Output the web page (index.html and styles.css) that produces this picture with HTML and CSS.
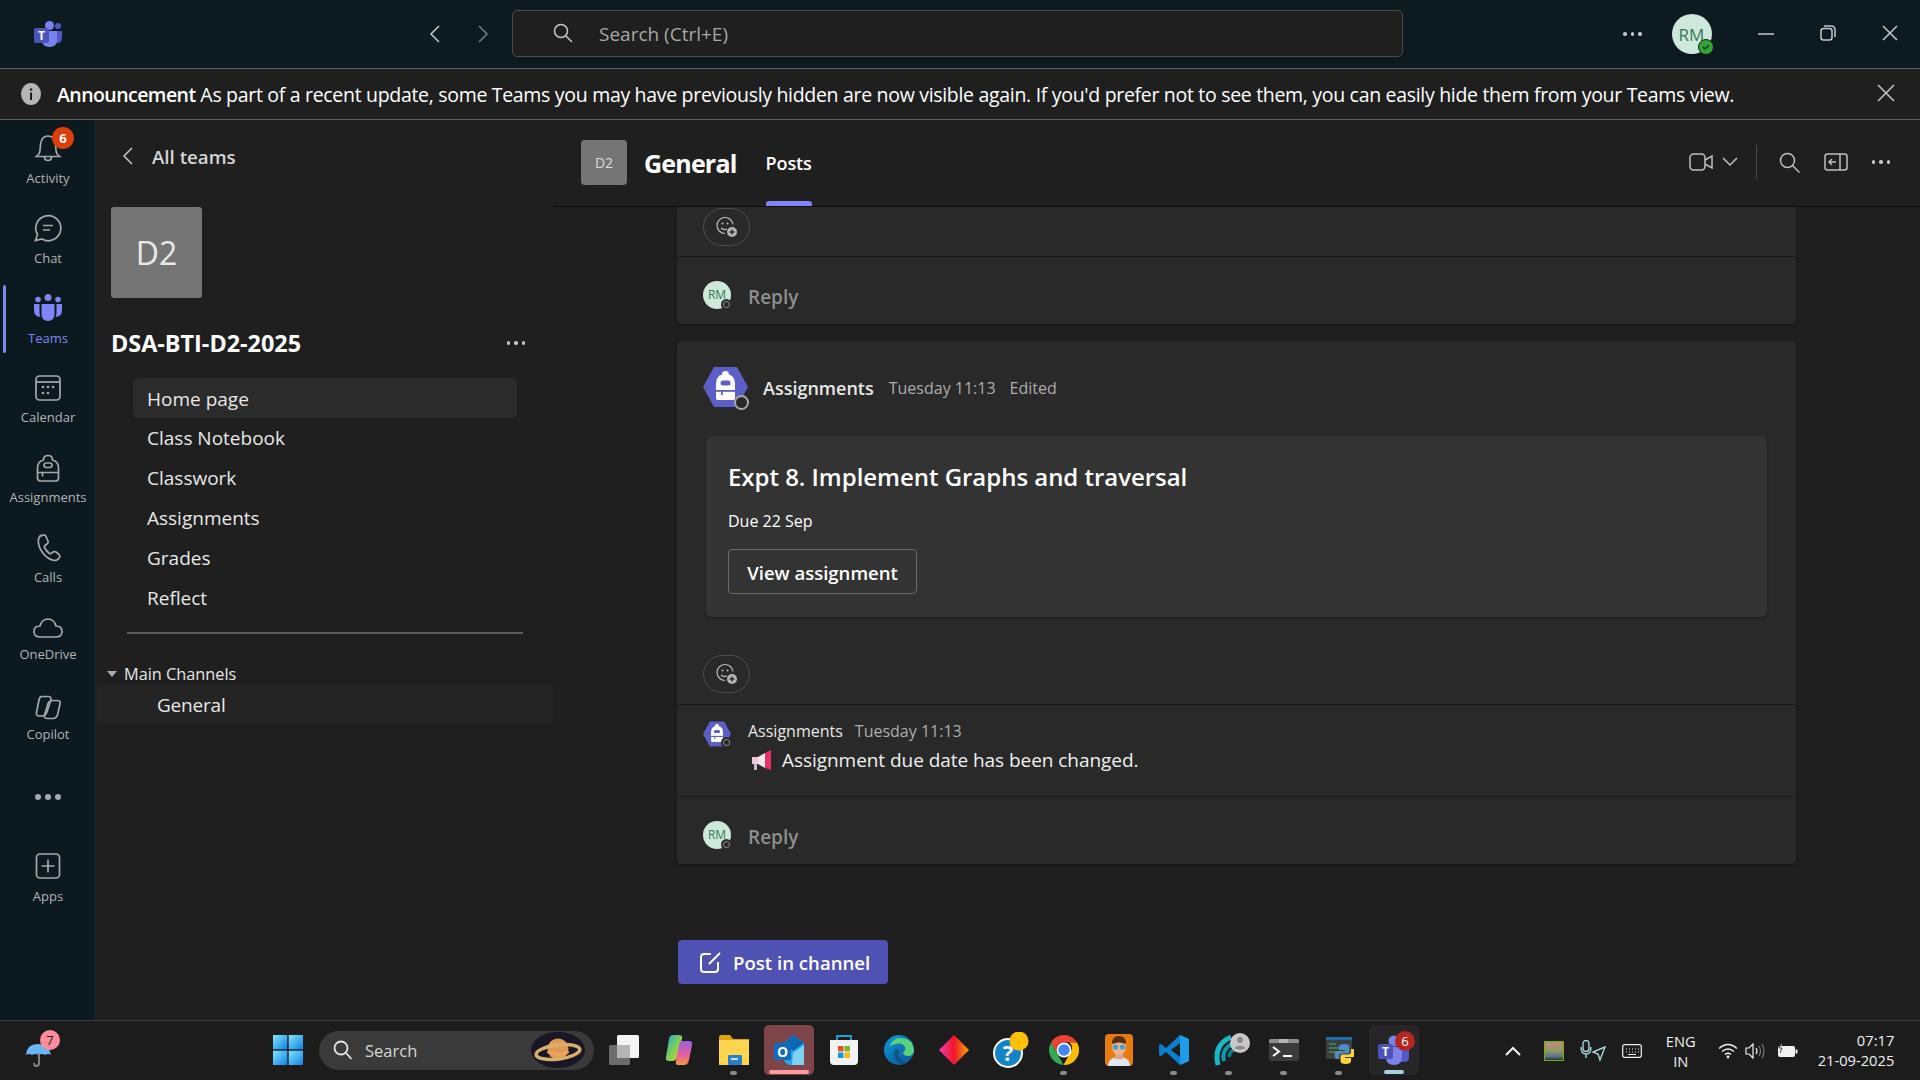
FILE: index.html
```html
<!DOCTYPE html>
<html lang="en">
<head>
    <meta charset="UTF-8">
    <title>General (DSA-BTI-D2-2025) | Microsoft Teams</title>
    <link rel="stylesheet" href="styles.css">
</head>
<body>
    <!-- shared icons -->
    <svg class="sprite">
        <symbol id="emoji" viewBox="0 0 22 22">
            <path d="M17 8.500A8 8 0 1 0 9 17.500" fill="none" stroke="#bdbdbd" stroke-width="1.200"/>
            <circle cx="6.500" cy="7.500" r="1" fill="#bdbdbd"/>
            <circle cx="11.500" cy="7.500" r="1" fill="#bdbdbd"/>
            <path d="M5 12q3 2.500 6 1" fill="none" stroke="#bdbdbd" stroke-width="1.200"/>
            <circle cx="16" cy="16" r="5" fill="#b5b5b5"/>
            <path d="M16 13.500v5M13.500 16h5" stroke="#292929" stroke-width="1.400"/>
        </symbol>
        <symbol id="bag" viewBox="0 0 45 40">
            <polygon points="11,0 34,0 45,20 34,40 11,40 0,20" fill="#5b5fc7"/>
            <path d="M13 17q0-8 6-9.500q0-3.500 3.500-3.500t3.500 3.500q6 1.500 6 9.500v14q0 2-2 2h-15q-2 0-2-2z" fill="#fff"/>
            <rect x="17.500" y="13.500" width="10" height="5" rx="2.500" fill="#5b5fc7"/>
            <rect x="13" y="23" width="19" height="1.800" fill="#5b5fc7"/>
            <rect x="18" y="23" width="1.800" height="5" fill="#5b5fc7"/>
        </symbol>
    </svg>

    <div class="app">
        <header class="titlebar">
            <svg class="teams-logo" width="28" height="26" viewBox="0 0 28 26">
                <circle cx="24" cy="5" r="3" fill="#5059c9"/>
                <path d="M17 10h10a1 1 0 0 1 1 1v6q0 5-5 5t-6-4z" fill="#5059c9"/>
                <circle cx="15.500" cy="4.500" r="4.500" fill="#7b83eb"/>
                <path d="M8 10h14a1 1 0 0 1 1 1v8q0 7-7.500 7t-7.500-7z" fill="#7b83eb"/>
                <rect x="0" y="7" width="15" height="15" rx="2" fill="#4b53bc"/>
                <text x="7.500" y="19" class="logo-t">T</text>
            </svg>
            <div class="history">
                <svg width="12" height="20" viewBox="0 0 12 20"><path d="M10 2L2 10l8 8" class="line-light"/></svg>
                <svg width="12" height="20" viewBox="0 0 12 20"><path d="M2 2l8 8-8 8" class="line-dim"/></svg>
            </div>
            <div class="searchbox">
                <svg width="20" height="20" viewBox="0 0 20 20"><circle cx="8" cy="8" r="6.500" class="line-light"/><path d="M13 13l6 6" class="line-light"/></svg>
                <span>Search (Ctrl+E)</span>
            </div>
            <div class="title-right">
                <div class="dots"><i></i><i></i><i></i></div>
                <div class="me">
                    <span class="me-initials">RM</span>
                    <span class="me-status"><svg width="8" height="8" viewBox="0 0 8 8"><path d="M1 4l2 2 4-4" fill="none" stroke="#123" stroke-width="1.300"/></svg></span>
                </div>
                <svg class="win-min" width="16" height="2" viewBox="0 0 16 2"><path d="M0 1h16" class="line-light"/></svg>
                <svg class="win-max" width="16" height="16" viewBox="0 0 16 16"><rect x="1" y="3.500" width="11" height="11.500" rx="2.500" class="line-light"/><path d="M4 1h7q4 0 4 4v7" class="line-light"/></svg>
                <svg class="win-close" width="16" height="16" viewBox="0 0 16 16"><path d="M1 1l14 14M15 1L1 15" class="line-light"/></svg>
            </div>
        </header>

        <div class="announce">
            <svg width="20" height="22" viewBox="0 0 20 22"><ellipse cx="10" cy="11" rx="10" ry="11" fill="#b5b5b5"/><rect x="9" y="9.500" width="2" height="7.500" fill="#1f1f1f"/><circle cx="10" cy="6.500" r="1.300" fill="#1f1f1f"/></svg>
            <p><b>Announcement</b> As part of a recent update, some Teams you may have previously hidden are now visible again. If you'd prefer not to see them, you can easily hide them from your Teams view.</p>
            <svg class="announce-close" width="18" height="18" viewBox="0 0 18 18"><path d="M1 1l16 16M17 1L1 17" class="line-light"/></svg>
        </div>

        <div class="main">
            <nav class="rail">
                <a class="rail-item">
                    <svg width="28" height="28" viewBox="0 0 28 28"><path d="M2.500 22.500q3-2 3.500-6l.5-6q1-8.500 7.500-8.500t7.500 8.500l.5 6q.5 4 3.500 6z" class="line-rail"/><path d="M10.500 23q0 3.500 3.500 3.500t3.500-3.500" class="line-rail"/></svg>
                    <span class="rail-badge">6</span>
                    <span>Activity</span>
                </a>
                <a class="rail-item">
                    <svg width="28" height="28" viewBox="0 0 28 28"><path d="M1.500 26.500l2-6A12.500 12.500 0 1 1 8 25z" class="line-rail"/><path d="M9 11.500h10M9 16h7" class="line-rail"/></svg>
                    <span>Chat</span>
                </a>
                <a class="rail-item active">
                    <svg width="28" height="28" viewBox="0 0 28 28">
                        <circle cx="14" cy="3.500" r="3.500" fill="#7f85f5"/><circle cx="4" cy="5.500" r="2.800" fill="#7f85f5"/><circle cx="24" cy="5.500" r="2.800" fill="#7f85f5"/>
                        <path d="M7.500 10h13v10q0 7-6.500 7t-6.500-7z" fill="#7f85f5"/>
                        <path d="M0 10h5.500v8q0 3 1 5q-6.500 0-6.500-7zM28 10h-5.500v8q0 3-1 5q6.500 0 6.500-7z" fill="#7f85f5"/>
                    </svg>
                    <span>Teams</span>
                </a>
                <a class="rail-item snug">
                    <svg width="28" height="28" viewBox="0 0 28 28"><rect x="2" y="2" width="24" height="24" rx="3.500" class="line-rail"/><path d="M2 8h24" class="line-rail"/><circle cx="9" cy="13" r="1.300" fill="#a8a8a8"/><circle cx="14" cy="13" r="1.300" fill="#a8a8a8"/><circle cx="19" cy="13" r="1.300" fill="#a8a8a8"/><circle cx="9" cy="19" r="1.300" fill="#a8a8a8"/><circle cx="14" cy="19" r="1.300" fill="#a8a8a8"/></svg>
                    <span>Calendar</span>
                </a>
                <a class="rail-item snug">
                    <svg width="28" height="28" viewBox="0 0 28 28"><path d="M3.500 14q0-6.500 6-8q0-4.500 4.500-4.500t4.500 4.500q6 1.500 6 8v10q0 3-3 3H6.500q-3 0-3-3z" class="line-rail"/><rect x="10" y="9" width="8" height="4.500" rx="2.200" class="line-rail"/><path d="M3.500 18.500h21M8.500 18.500v4" class="line-rail"/></svg>
                    <span>Assignments</span>
                </a>
                <a class="rail-item snug">
                    <svg width="28" height="28" viewBox="0 0 28 28"><path d="M6 2.500l3-1.500q2-.5 3 1.500l2 4.500q.5 2-1 3l-2.500 2q-.5.5 0 1.500q2 4 5 6q1 .5 1.500 0l2-1.500q1.500-1 3 0l3 2.500q1.500 1.500.5 3q-2 3-5 3q-7-1-12-8q-5-7-4-13q.5-3 2.500-4.500z" class="line-rail"/></svg>
                    <span>Calls</span>
                </a>
                <a class="rail-item tight">
                    <svg width="30" height="28" viewBox="0 0 30 28"><path d="M7 23q-6 0-6-5.500T7 12q2-7 8-7t8 7q6 0 6 5.500T23 23z" class="line-rail"/></svg>
                    <span>OneDrive</span>
                </a>
                <a class="rail-item tight">
                    <svg width="28" height="28" viewBox="0 0 28 28"><path d="M8 2.500h6q3.500 0 3 3L13 18q-1 3-4 4H5q-3 0-2.500-3.500L5 6q.5-3.500 3-3.500z" class="line-rail"/><path d="M19 6.500h4q4 0 3 3.500l-2.500 11q-1 3-4 3.500h-6q-3.500 0-3-3l3.500-12q1-3 5-3z" class="line-rail"/></svg>
                    <span>Copilot</span>
                </a>
                <div class="rail-more"><i></i><i></i><i></i></div>
                <a class="rail-item">
                    <svg width="28" height="28" viewBox="0 0 28 28"><rect x="2.500" y="2" width="23" height="24" rx="3.500" class="line-rail"/><path d="M14 7.500v13M7.500 14h13" class="line-rail"/></svg>
                    <span>Apps</span>
                </a>
            </nav>

            <aside class="sidebar">
                <div class="back-row">
                    <svg width="12" height="20" viewBox="0 0 12 20"><path d="M10 2L2 10l8 8" class="line-light"/></svg>
                    <span>All teams</span>
                </div>
                <div class="team-tile">D2</div>
                <div class="team-name">
                    <span>DSA-BTI-D2-2025</span>
                    <div class="dots"><i></i><i></i><i></i></div>
                </div>
                <ul class="team-nav">
                    <li class="selected">Home page</li>
                    <li>Class Notebook</li>
                    <li>Classwork</li>
                    <li>Assignments</li>
                    <li>Grades</li>
                    <li>Reflect</li>
                </ul>
                <div class="side-divider"></div>
                <div class="channel-group"><span class="caret"></span>Main Channels</div>
                <div class="channel-row">General</div>
            </aside>

            <section class="content">
                <div class="channel-head">
                    <div class="channel-tile">D2</div>
                    <h1>General</h1>
                    <div class="tab">Posts</div>
                    <div class="head-tools">
                        <svg width="24" height="18" viewBox="0 0 24 18"><rect x="1" y="1" width="15" height="16" rx="3.500" class="line-mid"/><path d="M16 7l7-4v12l-7-4" class="line-mid"/></svg>
                        <svg class="tool-chev" width="16" height="10" viewBox="0 0 16 10"><path d="M1 1l7 7 7-7" class="line-mid"/></svg>
                        <span class="tool-sep"></span>
                        <svg width="21" height="21" viewBox="0 0 21 21"><circle cx="8.500" cy="8.500" r="7" class="line-mid"/><path d="M13.500 13.500l7 7" class="line-mid"/></svg>
                        <svg class="tool-pane" width="24" height="18" viewBox="0 0 24 18"><rect x="1" y="1" width="22" height="16" rx="2.500" class="line-mid"/><path d="M16 1v16M12 9H5M8 6L5 9l3 3" class="line-mid"/></svg>
                        <div class="dots"><i></i><i></i><i></i></div>
                    </div>
                </div>

                <div class="feed">
                    <article class="card card-cut">
                        <div class="react-row">
                            <div class="react-pill"><svg width="22" height="22"><use href="#emoji"/></svg></div>
                        </div>
                        <div class="reply-row">
                            <div class="mini-avatar">RM<span class="mini-status"></span></div>
                            <span>Reply</span>
                        </div>
                    </article>

                    <article class="card card-post">
                        <div class="post-head">
                            <div class="bag-avatar">
                                <svg width="45" height="40"><use href="#bag"/></svg>
                                <span class="bag-status"></span>
                            </div>
                            <strong>Assignments</strong>
                            <span class="meta">Tuesday 11:13</span>
                            <span class="meta">Edited</span>
                        </div>
                        <div class="assign-card">
                            <h2>Expt 8. Implement Graphs and traversal</h2>
                            <p>Due 22 Sep</p>
                            <button>View assignment</button>
                        </div>
                        <div class="react-row react-low">
                            <div class="react-pill"><svg width="22" height="22"><use href="#emoji"/></svg></div>
                        </div>
                        <div class="sub-post">
                            <div class="sub-avatar">
                                <svg width="28" height="26"><use href="#bag"/></svg>
                                <span class="mini-status"></span>
                            </div>
                            <div class="sub-body">
                                <div class="sub-head"><span class="sub-name">Assignments</span><span class="sub-time">Tuesday 11:13</span></div>
                                <div class="sub-text">
                                    <svg width="21" height="22" viewBox="0 0 21 22"><path d="M1 8h6v7H1z" fill="#f4c6d4"/><path d="M3 15h3v6H3z" fill="#c7b8d8"/><path d="M7 8l7-4v15l-7-4z" fill="#f1e6ea"/><path d="M14 4l6-3v20l-6-2z" fill="#e8306a"/></svg>
                                    <span>Assignment due date has been changed.</span>
                                </div>
                            </div>
                        </div>
                        <div class="reply-row">
                            <div class="mini-avatar">RM<span class="mini-status"></span></div>
                            <span>Reply</span>
                        </div>
                    </article>

                    <button class="post-btn">
                        <svg width="23" height="23" viewBox="0 0 23 23"><path d="M12 3H5Q2 3 2 6v12q0 3 3 3h11q3 0 3-3v-7" class="line-white"/><path d="M10 13L21 2" class="line-white"/></svg>
                        Post in channel
                    </button>
                </div>
            </section>
        </div>

        <footer class="taskbar">
            <div class="weather">
                <svg width="26" height="26" viewBox="0 0 26 26"><path d="M0 14Q1 3 12 3t13 11q-3-2-6 0q-3-2-6.500 0q-3-2-6.500 0q-3-2-6 0z" fill="#6ab7f5"/><path d="M13 12v10q0 3-2.500 3T8 22" fill="none" stroke="#8a8a8a" stroke-width="1.800"/></svg>
                <span class="weather-badge">7</span>
            </div>
            <div class="task-center">
                <div class="task-item">
                    <svg width="30" height="30" viewBox="0 0 30 30">
                        <defs><linearGradient id="win" x1="0" y1="0" x2="1" y2="1"><stop offset="0" stop-color="#7ee8fa"/><stop offset="1" stop-color="#0f7fe8"/></linearGradient></defs>
                        <rect x="0" y="0" width="14.300" height="14.300" fill="url(#win)"/><rect x="15.700" y="0" width="14.300" height="14.300" fill="url(#win)"/><rect x="0" y="15.700" width="14.300" height="14.300" fill="url(#win)"/><rect x="15.700" y="15.700" width="14.300" height="14.300" fill="url(#win)"/>
                    </svg>
                </div>
                <div class="task-search">
                    <svg width="20" height="20" viewBox="0 0 20 20"><circle cx="8" cy="8" r="6.500" fill="none" stroke="#e6e6e6" stroke-width="1.800"/><path d="M13 13l5.500 6" stroke="#e6e6e6" stroke-width="1.800"/></svg>
                    <span>Search</span>
                    <svg class="saturn" width="54" height="36" viewBox="0 0 54 36">
                        <ellipse cx="27" cy="18" rx="27" ry="18" fill="#191626"/>
                        <circle cx="27" cy="17" r="10.500" fill="#e49a55"/>
                        <ellipse cx="27" cy="20" rx="22" ry="7" fill="none" stroke="#d8b06a" stroke-width="3.500" transform="rotate(-7 27 20)"/>
                        <path d="M16 21q11 6 22 0v-2q-11 4-22 0z" fill="#e8a865"/>
                    </svg>
                </div>
                <div class="task-item after-search">
                    <svg width="30" height="30" viewBox="0 0 30 30"><rect x="0" y="10" width="21" height="20" rx="1.500" fill="#6c6c6c"/><rect x="8" y="0" width="22" height="23" rx="1.500" fill="#f4f4f4"/><rect x="8" y="10" width="13" height="13" fill="#b5b5b5"/></svg>
                </div>
                <div class="task-item">
                    <svg width="28" height="32" viewBox="0 0 28 32">
                        <defs><linearGradient id="cop1" x1="0" y1="0" x2="1" y2="1"><stop offset="0" stop-color="#1fa0e8"/><stop offset=".5" stop-color="#7bd152"/><stop offset="1" stop-color="#f4c430"/></linearGradient><linearGradient id="cop2" x1="0" y1="0" x2="0" y2="1"><stop offset="0" stop-color="#9a5fe0"/><stop offset=".6" stop-color="#e85f9a"/><stop offset="1" stop-color="#f49a40"/></linearGradient></defs>
                        <path d="M8 1h6q4 0 3 4l-5 19q-1 3-5 3H4q-4 0-3-4L4 5q1-4 4-4z" fill="url(#cop1)"/>
                        <path d="M17 7h7q4 0 3 4l-3 15q-1 5-5 5h-6q-3 0-2-4l3-16q1-4 3-4z" fill="url(#cop2)"/>
                    </svg>
                </div>
                <div class="task-item open">
                    <svg width="30" height="30" viewBox="0 0 30 30"><path d="M0 2q0-2 2-2h9l3 4h16v26H0z" fill="#e0a30f"/><rect x="0" y="5" width="30" height="25" fill="#ffd54f"/><rect x="9" y="20" width="14" height="10" rx="1" fill="#2a7fc9"/><rect x="12" y="23" width="7" height="2" fill="#bfe0f7"/></svg>
                </div>
                <div class="task-item outlook">
                    <svg width="30" height="30" viewBox="0 0 30 30"><path d="M10 8l9-8 11 8v22H17q-7 0-7-7z" fill="#28a8ea"/><path d="M10 8l9-8 11 8-11 8z" fill="#0a68b4"/><path d="M19 18l11-8v20H18z" fill="#7fd1f5"/><rect x="0" y="8" width="17" height="17" rx="1.500" fill="#0f6cbd"/><text x="8.500" y="21.500" class="tile-letter">O</text></svg>
                </div>
                <div class="task-item">
                    <svg width="30" height="30" viewBox="0 0 30 30"><path d="M8 5V1h14v4" fill="none" stroke="#18a6df" stroke-width="1.800"/><path d="M1 5h28v21q0 4-4 4H5q-4 0-4-4z" fill="#f3f3f3"/><rect x="9" y="11" width="5.500" height="5.500" fill="#e8502a"/><rect x="15.500" y="11" width="5.500" height="5.500" fill="#7cb82f"/><rect x="9" y="17.500" width="5.500" height="5.500" fill="#1798dd"/><rect x="15.500" y="17.500" width="5.500" height="5.500" fill="#fdb813"/></svg>
                </div>
                <div class="task-item">
                    <svg width="30" height="30" viewBox="0 0 30 30">
                        <defs><linearGradient id="edge" x1="0" y1="0" x2="1" y2="1"><stop offset="0" stop-color="#0c9bd6"/><stop offset="1" stop-color="#0b4f95"/></linearGradient></defs>
                        <circle cx="15" cy="15" r="15" fill="url(#edge)"/>
                        <path d="M5 12Q9 2 18 3q11 1 12 12q0 6-6 6q-5 0-5-4q3-1 2-5-3-5-9-3-5 1-7 3z" fill="#58d27a"/>
                        <path d="M12 13q-5 7 2 14 3 2 7 1-8-4-6-12z" fill="#1f1f1f" opacity=".35"/>
                    </svg>
                </div>
                <div class="task-item">
                    <svg width="30" height="30" viewBox="0 0 30 30">
                        <defs><linearGradient id="rhomb" x1="0" y1="0" x2="1" y2="0"><stop offset="0" stop-color="#f03fb0"/><stop offset=".5" stop-color="#f0142a"/><stop offset="1" stop-color="#f5a800"/></linearGradient></defs>
                        <polygon points="15,0 30,15 15,30 0,15" fill="url(#rhomb)"/>
                    </svg>
                </div>
                <div class="task-item">
                    <svg width="40" height="36" viewBox="-4 0 40 36"><circle cx="15" cy="21" r="14" fill="#1583c8" stroke="#fff" stroke-width="2"/><text x="15" y="29" class="help-mark">?</text><ellipse cx="26" cy="9" rx="9.500" ry="9.500" fill="#ffc107"/></svg>
                </div>
                <div class="task-item open">
                    <svg width="30" height="30" viewBox="0 0 30 30"><path d="M15 0A15 15 0 0 1 28 7.500H15z" fill="#ea4335"/><path d="M2 7.500A15 15 0 0 1 15 0v7.500A7.500 7.500 0 0 0 8.500 19z" fill="#ea4335"/><path d="M2 7.500L8.500 19l6 11A15 15 0 0 1 2 7.500z" fill="#34a853"/><path d="M28 7.500A15 15 0 0 1 14.500 30l6-11a7.500 7.500 0 0 0 0-11.500z" fill="#fbbc05"/><circle cx="15" cy="15" r="7.500" fill="#fff"/><circle cx="15" cy="15" r="5.800" fill="#4285f4"/></svg>
                </div>
                <div class="task-item">
                    <svg width="28" height="32" viewBox="0 0 28 32"><rect width="28" height="32" rx="4" fill="#e87b10"/><path d="M3 32q0-9 11-9t11 9z" fill="#dfe8f0"/><rect x="10" y="17" width="8" height="8" fill="#e0a482"/><ellipse cx="14" cy="13" rx="7" ry="8" fill="#eab48f"/><path d="M7 10q0-8 7-8t7 8q-7-3-14 0z" fill="#5a2d12"/><circle cx="10.500" cy="13" r="2.600" fill="#3aa0d8"/><circle cx="17.500" cy="13" r="2.600" fill="#3aa0d8"/></svg>
                </div>
                <div class="task-item open">
                    <svg width="30" height="30" viewBox="0 0 30 30"><path d="M21 0l9 4v22l-9 4L7 17l-5 4-2-1V10l2-1 5 4z" fill="#0a7fd0"/><path d="M21 0l9 4v22l-9 4z" fill="#1f9ce8"/><path d="M21 8v14l-9-7z" fill="#1f1f1f"/></svg>
                </div>
                <div class="task-item open">
                    <svg width="41" height="36" viewBox="-4 0 41 36">
                        <path d="M5 33Q0 13 18 5" fill="none" stroke="#17b6c9" stroke-width="5"/>
                        <path d="M11 29Q8 18 19 12" fill="none" stroke="#0f97a8" stroke-width="4"/>
                        <path d="M17 25Q15 20 21 18" fill="none" stroke="#0c7f8e" stroke-width="3.500"/>
                        <circle cx="27" cy="11" r="10" fill="#c9c9c9"/>
                        <circle cx="27" cy="8" r="3" fill="#8a8a8a"/>
                        <path d="M21 16q6-5 12 0q-6 3.500-12 0z" fill="#8a8a8a"/>
                    </svg>
                </div>
                <div class="task-item open">
                    <svg width="30" height="22" viewBox="0 0 30 22"><rect width="30" height="22" rx="2" fill="#3c3c3c"/><path d="M2 0h26q2 0 2 2v2H0V2q0-2 2-2z" fill="#8f8f8f"/><rect x="10" width="9" height="4" fill="#b5b5b5"/><path d="M4 8l6 4.500-6 4.500" fill="none" stroke="#fff" stroke-width="2"/><path d="M14 17h9" stroke="#fff" stroke-width="2"/></svg>
                </div>
                <div class="task-item open">
                    <svg width="30" height="30" viewBox="0 0 30 30">
                        <rect x="2" y="2" width="26" height="22" rx="1" fill="#3a3f44"/><rect x="2" y="2" width="26" height="3" fill="#1d6fa8"/>
                        <path d="M5 9h7M5 13h10M5 17h8" stroke="#4e8a5a" stroke-width="1.300"/>
                        <g transform="translate(3 1)">
                            <path d="M17.500 8q-5.500 0-5.500 3v3h6v1H10.500q-3 0-3 4t3 4H12v-3q0-2.500 3-2.500h5.500q2 0 2-2v-4.500q0-3-5-3z" fill="#4f8ec4"/>
                            <path d="M17.500 8q-5.500 0-5.500 3v3h6v1H10.500q-3 0-3 4t3 4H12v-3q0-2.500 3-2.500h5.500q2 0 2-2v-4.500q0-3-5-3z" fill="#ffd43b" transform="rotate(180 18 18)"/>
                        </g>
                    </svg>
                </div>
                <div class="task-item teams-item">
                    <svg width="32" height="30" viewBox="0 0 32 30"><circle cx="26" cy="7" r="4" fill="#5059c9"/><path d="M20 12h11v10q0 5-5 5t-6-5z" fill="#5059c9"/><circle cx="16" cy="6" r="5.500" fill="#7b83eb"/><path d="M8 12h16v10q0 8-8 8t-8-8z" fill="#7b83eb"/><rect x="0" y="9" width="15" height="15" rx="2" fill="#4b53bc"/><text x="7.500" y="21" class="logo-t">T</text></svg>
                    <span class="teams-badge">6</span>
                </div>
            </div>
            <div class="tray">
                <svg class="tray-chev" width="16" height="10" viewBox="0 0 16 10"><path d="M1 9l7-7 7 7" class="line-tray"/></svg>
                <svg class="tray-color" width="20" height="20" viewBox="0 0 20 20">
                    <defs><linearGradient id="swatch" x1="0" y1="0" x2="0" y2="1"><stop offset="0" stop-color="#c98a7a"/><stop offset=".5" stop-color="#8d9a6a"/><stop offset=".8" stop-color="#5a6f8d"/><stop offset="1" stop-color="#1a2a20"/></linearGradient></defs>
                    <rect x=".5" y=".5" width="19" height="19" fill="url(#swatch)" stroke="#6fb300"/>
                </svg>
                <svg class="tray-mic" width="26" height="22" viewBox="0 0 26 22"><rect x="3" y="0.500" width="6" height="11" rx="3" fill="none" stroke="#a5d5da" stroke-width="1.400"/><path d="M1 7q0 7 5 7t5-7M6 14v4" fill="none" stroke="#a5d5da" stroke-width="1.400"/><path d="M25 7l-12 5 5 2 2 6z" fill="none" stroke="#a5d5da" stroke-width="1.400"/></svg>
                <svg class="tray-keys" width="20" height="14" viewBox="0 0 20 14"><rect x=".7" y=".7" width="18.600" height="12.600" rx="2" fill="none" stroke="#f0f0f0" stroke-width="1.200"/><path d="M4 5h1M7 5h1M10 5h1M13 5h1M16 5h1M4 8h1M7 8h1M10 8h1M13 8h1M16 8h1M6 10.500h8" stroke="#f0f0f0"/></svg>
                <div class="tray-lang">ENG<br>IN</div>
                <svg class="tray-wifi" width="20" height="16" viewBox="0 0 20 16"><path d="M1 5.500q9-8 18 0M4 8.500q6-5 12 0M7 11.500q3-2.500 6 0" fill="none" stroke="#f0f0f0" stroke-width="1.300"/><circle cx="10" cy="14" r="1.400" fill="#f0f0f0"/></svg>
                <svg class="tray-vol" width="20" height="16" viewBox="0 0 20 16"><path d="M1 5h3l4-4v14l-4-4H1z" fill="none" stroke="#f0f0f0" stroke-width="1.200"/><path d="M11 5q2 3 0 6" fill="none" stroke="#f0f0f0" stroke-width="1.200"/><path d="M14 3q3 5 0 10M17 1q4 7 0 14" fill="none" stroke="#777" stroke-width="1.200"/></svg>
                <svg class="tray-batt" width="21" height="18" viewBox="0 0 21 18"><rect x="1" y="4" width="17" height="11" rx="2" fill="#f0f0f0"/><rect x="18.500" y="7.500" width="2" height="4" fill="#f0f0f0"/><path d="M5 0L2 6h3l-2 5" fill="#f0f0f0" stroke="#1c1c1c" stroke-width=".8"/></svg>
                <div class="tray-clock">07:17<br>21-09-2025</div>
            </div>
        </footer>
    </div>
</body>
</html>
```

FILE: styles.css
```css
* {
    box-sizing: border-box;
}
body {
    margin: 0;
    background-color: #1f1f1f;
    color: #fff;
    font-family: "Open Sans", "Noto Sans", sans-serif;
}
h1, h2, p, ul {
    margin: 0;
    padding: 0;
}
.sprite {
    position: absolute;
    width: 0;
    height: 0;
}
.line-light, .line-dim, .line-rail, .line-mid, .line-white, .line-tray {
    fill: none;
    stroke-width: 1.5;
}
.line-light { stroke: #c8c8c8; }
.line-dim { stroke: #7d7d7d; }
.line-rail { stroke: #a8a8a8; stroke-width: 1.7; }
.line-mid { stroke: #c0c0c0; }
.line-white { stroke: #fff; stroke-width: 2; }
.line-tray { stroke: #f0f0f0; stroke-width: 2; }
.logo-t {
    fill: #fff;
    font-size: 12px;
    font-weight: 700;
    text-anchor: middle;
}
.dots {
    display: flex;
    gap: 4px;
}
.dots i {
    width: 3.500px;
    height: 3.500px;
    border-radius: 50%;
    background-color: #c8c8c8;
}

.app {
    display: flex;
    flex-direction: column;
    width: 1920px;
    height: 1080px;
    overflow: hidden;
}

/* title bar */
.titlebar {
    display: flex;
    align-items: center;
    height: 69px;
    flex-shrink: 0;
    background-color: #0d1a20;
    border-bottom: 1px solid #5c6164;
    padding-left: 34px;
}
.history {
    display: flex;
    gap: 36px;
    margin-left: 367px;
}
.searchbox {
    display: flex;
    align-items: center;
    width: 891px;
    height: 47px;
    margin-left: 23px;
    margin-top: -2px;
    padding-left: 40px;
    background-color: #1f1f1f;
    border: 1px solid #4a4a4a;
    border-radius: 5px;
    color: #a8a8a8;
    font-size: 19px;
}
.searchbox span {
    margin: 2px 0 0 26px;
}
.title-right {
    display: flex;
    align-items: center;
    margin-left: 220px;
}
.me {
    position: relative;
    display: flex;
    align-items: center;
    justify-content: center;
    width: 40px;
    height: 40px;
    margin-left: 30px;
    border-radius: 50%;
    background-color: #cfe8dc;
    color: #2f7a55;
    font-size: 17px;
}
.me-status {
    position: absolute;
    right: -2px;
    bottom: -1px;
    display: flex;
    align-items: center;
    justify-content: center;
    width: 16px;
    height: 16px;
    border-radius: 50%;
    background-color: #2ea82e;
    border: 1px solid #0d1a20;
}
.win-min { margin-left: 46px; }
.win-max { margin-left: 46px; margin-top: -2px; }
.win-close { margin-left: 46px; margin-top: -2px; }

/* announcement */
.announce {
    display: flex;
    align-items: center;
    height: 51px;
    flex-shrink: 0;
    padding-left: 21px;
    background-color: #1f1f1f;
    border-bottom: 1px solid #5c5c5c;
}
.announce p {
    margin-left: 16px;
    font-size: 19.500px;
    letter-spacing: -0.310px;
    white-space: nowrap;
}
.announce b {
    font-weight: 600;
    letter-spacing: -0.550px;
}
.announce-close {
    margin-left: auto;
    margin-right: 25px;
    margin-top: -2px;
}

.main {
    display: flex;
    flex: 1;
    min-height: 0;
}

/* left rail */
.rail {
    display: flex;
    flex-direction: column;
    width: 96px;
    flex-shrink: 0;
    padding-top: 14px;
    padding-left: 1px;
    background-color: #0c191e;
    border-right: 1px solid #1b2a30;
}
.rail-item {
    position: relative;
    display: flex;
    flex-direction: column;
    align-items: center;
    height: 80px;
    color: #b4b4b4;
    font-size: 13px;
    line-height: 18px;
}
.rail-item span {
    margin-top: 7px;
}
.rail-item.snug span {
    margin-top: 6px;
}
.rail-item.tight span {
    margin-top: 3px;
}
.rail-item.active {
    color: #7f85f5;
}
.rail-item.active::before {
    content: "";
    position: absolute;
    left: 2px;
    top: -9px;
    width: 3px;
    height: 68px;
    background-color: #7f85f5;
    border-radius: 2px;
}
.rail-item .rail-badge {
    position: absolute;
    top: -7px;
    left: 51px;
    width: 22px;
    height: 22px;
    margin: 0;
    border-radius: 50%;
    background-color: #dc3e0c;
    color: #fff;
    font-size: 13px;
    font-weight: 700;
    line-height: 22px;
    text-align: center;
}
.rail-more {
    display: flex;
    justify-content: center;
    align-items: center;
    gap: 4px;
    height: 46px;
    margin-bottom: 32px;
}
.rail-more i {
    width: 6px;
    height: 6px;
    border-radius: 50%;
    background-color: #a8a8a8;
}

/* team sidebar */
.sidebar {
    display: flex;
    flex-direction: column;
    width: 457px;
    flex-shrink: 0;
}
.back-row {
    display: flex;
    align-items: center;
    height: 40px;
    margin-top: 16px;
    margin-bottom: 1px;
    padding-left: 26px;
    color: #d6d6d6;
    font-size: 18.700px;
    font-weight: 600;
}
.back-row span {
    margin-left: 18px;
}
.team-tile {
    display: flex;
    align-items: center;
    justify-content: center;
    width: 91px;
    height: 91px;
    margin: 30px 0 0 15px;
    background-color: #757575;
    border-radius: 3px;
    color: #e8e8e8;
    font-size: 32px;
}
.team-name {
    display: flex;
    align-items: center;
    justify-content: space-between;
    height: 30px;
    margin-top: 30px;
    padding: 0 28px 0 15px;
    font-size: 23.400px;
    font-weight: 700;
}
.team-nav {
    list-style: none;
    width: 384px;
    margin: 20px 0 0 37px;
}
.team-nav li {
    height: 40px;
    padding-left: 14px;
    color: #e8e8e8;
    font-size: 19px;
    line-height: 40px;
}
.team-nav .selected {
    background-color: #2b2b2b;
    border-radius: 5px;
    line-height: 42px;
}
.side-divider {
    width: 396px;
    height: 2px;
    margin: 14px 0 0 31px;
    background-color: #5c5c5c;
}
.channel-group {
    display: flex;
    align-items: center;
    height: 24px;
    margin-top: 28px;
    margin-bottom: -1px;
    padding-left: 11px;
    color: #e8e8e8;
    font-size: 16.300px;
}
.caret {
    width: 0;
    height: 0;
    margin-right: 7px;
    border-style: solid;
    border-width: 6px 5px 0;
    border-color: #adadad transparent transparent;
}
.channel-row {
    height: 38px;
    margin: 0 0 0 1px;
    padding-left: 60px;
    background-color: #242424;
    border-radius: 4px;
    color: #e8e8e8;
    font-size: 19px;
    letter-spacing: -0.200px;
    line-height: 40px;
}

/* channel */
.content {
    display: flex;
    flex-direction: column;
    flex: 1;
    min-width: 0;
}
.channel-head {
    display: flex;
    align-items: center;
    height: 87px;
    flex-shrink: 0;
    padding-left: 28px;
    border-bottom: 1px solid #0f0f0f;
}
.channel-tile {
    display: flex;
    align-items: center;
    justify-content: center;
    width: 46px;
    height: 45px;
    margin-top: -2px;
    background-color: #757575;
    border-radius: 4px;
    color: #dcdcdc;
    font-size: 14px;
}
.channel-head h1 {
    margin-left: 17px;
    font-size: 25px;
    font-weight: 700;
    letter-spacing: -0.800px;
}
.tab {
    position: relative;
    display: flex;
    align-items: center;
    height: 86px;
    margin-left: 29px;
    font-size: 18px;
    font-weight: 600;
    letter-spacing: -0.100px;
}
.tab::after {
    content: "";
    position: absolute;
    left: 0;
    right: 0;
    bottom: 0;
    height: 5px;
    background-color: #7f85f5;
    border-radius: 3px 3px 0 0;
}
.head-tools {
    display: flex;
    align-items: center;
    margin-left: auto;
    margin-top: -2px;
    padding-right: 30px;
}
.tool-chev { margin-left: 9px; }
.tool-sep {
    width: 1px;
    height: 34px;
    margin: 0 22px 0 18px;
    background-color: #4a4a4a;
}
.tool-pane { margin: 0 24px 0 24px; }

.feed {
    display: flex;
    flex-direction: column;
    align-items: flex-start;
    flex: 1;
    padding-left: 124px;
}
.card {
    width: 1119px;
    background-color: #292929;
    border-radius: 4px;
    box-shadow: 0 1px 3px rgba(0, 0, 0, 0.4);
}
.card-cut {
    border-radius: 0 0 4px 4px;
}
.card-post {
    margin-top: 17px;
}
.react-row {
    height: 50px;
    padding: 1px 0 0 26px;
    border-bottom: 1px solid #1a1a1a;
}
.react-low {
    margin-top: 38px;
    padding-top: 0;
}
.react-pill {
    display: flex;
    align-items: center;
    justify-content: center;
    width: 47px;
    height: 38px;
    border: 1px solid #4d4d4d;
    border-radius: 19px;
}
.reply-row {
    display: flex;
    height: 67px;
    padding: 24px 0 0 26px;
    color: #8f8f8f;
    font-size: 19px;
    font-weight: 600;
}
.reply-row > span {
    margin: 3px 0 0 17px;
}
.mini-avatar {
    position: relative;
    width: 28px;
    height: 28px;
    border-radius: 50%;
    background-color: #cfe8dc;
    color: #2f7a55;
    font-size: 12px;
    font-weight: 400;
    line-height: 27px;
    text-align: center;
}
.mini-status {
    position: absolute;
    right: -1px;
    bottom: -1px;
    width: 11px;
    height: 11px;
    border-radius: 50%;
    background-color: #292929;
    border: 2px solid #292929;
    box-shadow: inset 0 0 0 1px #8f8f8f;
}
.post-head {
    display: flex;
    align-items: center;
    height: 40px;
    margin: 26px 0 0 26px;
}
.bag-avatar {
    position: relative;
    width: 45px;
    height: 40px;
}
.bag-status {
    position: absolute;
    right: -1px;
    bottom: -3px;
    width: 15px;
    height: 15px;
    border-radius: 50%;
    background-color: #292929;
    border: 2px solid #a8a8a8;
}
.post-head strong {
    margin: 2px 0 0 15px;
    color: #e8e8e8;
    font-size: 18px;
    font-weight: 600;
}
.meta {
    margin: 2px 0 0 14px;
    color: #adadad;
    font-size: 16px;
}
.post-head strong + .meta {
    margin-left: 15px;
}
.assign-card {
    height: 181px;
    margin: 29px 29px 0 29px;
    padding: 25px 0 0 22px;
    background-color: #333;
    border-radius: 6px;
    box-shadow: 0 1px 3px rgba(0, 0, 0, 0.35);
}
.assign-card h2 {
    font-size: 24px;
    font-weight: 600;
    letter-spacing: -0.030px;
    line-height: 32px;
}
.assign-card p {
    margin-top: 17px;
    font-size: 16px;
    line-height: 23px;
}
.assign-card button {
    width: 189px;
    height: 45px;
    margin-top: 16px;
    padding: 2px 0 0;
    background-color: transparent;
    border: 1px solid #6b6b6b;
    border-radius: 4px;
    color: #fff;
    font-family: inherit;
    font-size: 18.500px;
    font-weight: 600;
}
.sub-post {
    display: flex;
    height: 92px;
    padding: 16px 0 0 26px;
    border-bottom: 1px solid #1a1a1a;
}
.sub-avatar {
    position: relative;
    width: 28px;
    height: 26px;
}
.sub-body {
    margin-left: 17px;
}
.sub-head {
    display: flex;
    align-items: center;
    height: 20px;
}
.sub-name {
    color: #e8e8e8;
    font-size: 16px;
}
.sub-time {
    margin-left: 12px;
    color: #adadad;
    font-size: 16px;
}
.sub-text {
    display: flex;
    align-items: center;
    height: 30px;
    margin-top: 4px;
    padding-left: 3px;
    color: #f0f0f0;
    font-size: 19px;
    letter-spacing: -0.050px;
}
.sub-text span {
    margin-left: 10px;
}
.post-btn {
    display: flex;
    align-items: center;
    gap: 11px;
    width: 210px;
    height: 44px;
    margin: 76px 0 0 1px;
    padding-left: 21px;
    background-color: #4f52b2;
    border: none;
    border-radius: 4px;
    color: #fff;
    font-family: inherit;
    font-size: 18.600px;
    font-weight: 600;
}

/* windows taskbar */
.taskbar {
    display: flex;
    align-items: center;
    height: 60px;
    flex-shrink: 0;
    background-color: #1c1c1c;
    border-top: 1px solid #3d3d3d;
}
.weather {
    position: relative;
    width: 26px;
    height: 26px;
    margin: 6px 0 0 26px;
}
.weather-badge {
    position: absolute;
    top: -11px;
    left: 14px;
    width: 20px;
    height: 20px;
    border-radius: 50%;
    background-color: #ff8c9a;
    color: #1c1c1c;
    font-size: 13px;
    line-height: 20px;
    text-align: center;
}
.task-center {
    display: flex;
    align-items: center;
    margin-left: 208px;
    margin-top: -1px;
}
.task-item {
    position: relative;
    display: flex;
    align-items: center;
    justify-content: center;
    width: 50px;
    height: 50px;
    margin: 0 2.500px;
    padding-bottom: 1px;
}
.task-item.after-search {
    margin-left: 5px;
}
.task-item.open::after {
    content: "";
    position: absolute;
    left: 21px;
    bottom: 0;
    width: 7px;
    height: 4px;
    border-radius: 2px;
    background-color: #8a8a8a;
}
.task-item.outlook {
    background-color: #7d4449;
    border-radius: 5px;
}
.task-item.outlook::after {
    content: "";
    position: absolute;
    left: 5px;
    right: 5px;
    bottom: 1px;
    height: 4px;
    border-radius: 2px;
    background-color: #ff9aa2;
}
.task-item.teams-item {
    background-color: #262626;
    border-radius: 5px;
}
.task-item.teams-item::after {
    content: "";
    position: absolute;
    left: 15px;
    right: 15px;
    bottom: 1px;
    height: 4px;
    border-radius: 2px;
    background-color: #a5d5da;
}
.teams-badge {
    position: absolute;
    top: 6px;
    right: 4px;
    width: 20px;
    height: 20px;
    border-radius: 50%;
    background-color: #b5261e;
    color: #fff;
    font-size: 13px;
    line-height: 20px;
    text-align: center;
}
.tile-letter {
    fill: #fff;
    font-size: 14px;
    font-weight: 700;
    text-anchor: middle;
}
.help-mark {
    fill: #fff;
    font-size: 22px;
    font-weight: 700;
    text-anchor: middle;
}
.task-search {
    display: flex;
    align-items: center;
    width: 275px;
    height: 39px;
    margin-left: 4px;
    padding-left: 14px;
    background-color: #3a3a3a;
    border-radius: 20px;
    color: #d6d6d6;
    font-size: 16.500px;
}
.task-search span {
    margin-left: 12px;
}
.saturn {
    margin-left: auto;
    margin-right: 9px;
}
.tray {
    display: flex;
    align-items: center;
    margin-left: 83.500px;
    color: #f0f0f0;
    font-size: 14.700px;
    line-height: 20px;
}
.tray-color { margin-left: 23px; }
.tray-mic { margin-left: 15.500px; }
.tray-keys { margin-left: 16px; }
.tray-lang {
    width: 40px;
    margin-left: 19.300px;
    text-align: center;
}
.tray-wifi { margin-left: 17px; }
.tray-vol { margin-left: 7px; }
.tray-batt { margin-left: 12px; }
.tray-clock {
    width: 90px;
    margin-left: 6.500px;
    margin-top: -2px;
    text-align: right;
}
```
